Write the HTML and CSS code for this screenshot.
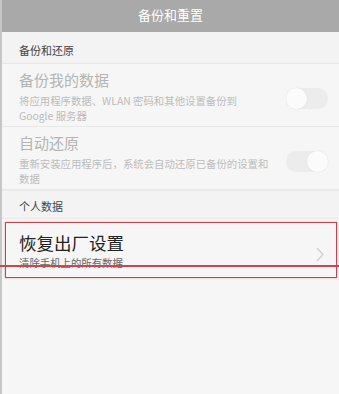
FILE: index.html
```html
<!DOCTYPE html>
<html lang="zh">
<head>
    <meta charset="UTF-8">
    <meta name="viewport" content="width=device-width, initial-scale=1.0">
    <title>备份和重置</title>
    <link rel="stylesheet" href="styles.css">
</head>
<body>
    <div class="page">
        <!-- 顶部标题栏 -->
        <div class="title-bar">备份和重置</div>

        <div class="group-title first">备份和还原</div>

        <div class="item disabled">
            <div class="item-text">
                <div class="item-name">备份我的数据</div>
                <div class="item-desc">将应用程序数据、WLAN 密码和其他设置备份到 Google 服务器</div>
            </div>
            <span class="switch"></span>
        </div>

        <div class="item disabled">
            <div class="item-text">
                <div class="item-name">自动还原</div>
                <div class="item-desc">重新安装应用程序后，系统会自动还原已备份的设置和数据</div>
            </div>
            <span class="switch on"></span>
        </div>

        <div class="group-title">个人数据</div>

        <div class="item reset">
            <div class="item-text">
                <div class="item-name">恢复出厂设置</div>
                <div class="item-desc">清除手机上的所有数据</div>
            </div>
            <svg class="arrow" width="8" height="15" viewBox="0 0 8 15">
                <path d="M1 1 L7 7.5 L1 14" fill="none" stroke="#cfcfcf" stroke-width="1.3"/>
            </svg>
        </div>

        <!-- 红色标注 -->
        <div class="mark-box"></div>
        <div class="mark-line"></div>
    </div>
</body>
</html>
```

FILE: styles.css
```css
* {
    margin: 0;
    padding: 0;
    box-sizing: border-box;
}

body {
    background: #f6f6f6;
    font-family: 'Noto Sans CJK SC', 'Noto Sans', sans-serif;
}

.page {
    position: relative;
    width: 339px;
    min-height: 394px;
    border-left: 2px solid #c6c6c6;
    background: #f6f6f6;
}

.title-bar {
    height: 32px;
    padding-bottom: 4px;
    background: #a9a9a9;
    color: #fff;
    font-size: 13px;
    display: flex;
    justify-content: center;
    align-items: center;
}

.group-title {
    padding: 10px 17px 5px;
    font-size: 11px;
    line-height: 16px;
    color: #444;
    background: #f3f3f3;
    border-bottom: 1px solid #e8e8e8;
}

.group-title.first {
    height: 32px;
}

.group-title:not(.first) {
    height: 29px;
    padding-top: 7px;
    border-top: 1px solid #ebebeb;
}

.item {
    display: flex;
    align-items: center;
    justify-content: space-between;
    padding: 6px 11px 3px 17px;
    border-bottom: 1px solid #e8e8e8;
}

.item-text {
    width: 254px;
}

.item-name {
    font-size: 15px;
    line-height: 20px;
}

.item-desc {
    margin-top: 4px;
    font-size: 10.4px;
    line-height: 14.5px;
}

.disabled .item-name {
    color: #b4b4b4;
}

.disabled .item-desc {
    color: #bcbcbc;
}

.disabled:nth-of-type(3) {
    height: 63px;
}

.disabled:nth-of-type(4) {
    height: 63px;
}

.switch {
    position: relative;
    width: 42px;
    height: 21px;
    border-radius: 11px;
    background: #ececec;
    margin-top: 4px;
}

.switch::after {
    content: '';
    position: absolute;
    top: 0;
    left: 0;
    width: 21px;
    height: 21px;
    border-radius: 50%;
    background: #fbfbfb;
    box-shadow: 0 0 2px rgba(0, 0, 0, 0.08);
}

.switch.on::after {
    left: auto;
    right: 0;
}

.reset {
    border-bottom: none;
    padding-top: 13px;
    padding-right: 15px;
}

.reset .item-name {
    font-size: 17.5px;
    line-height: 22px;
    color: #222;
}

.reset .item-desc {
    margin-top: 2px;
    font-size: 10.4px;
    color: #666;
}

.arrow {
    margin-top: 6px;
}

.mark-box {
    position: absolute;
    left: 3px;
    top: 222px;
    width: 332px;
    height: 56px;
    border: 1.5px solid #c8414b;
    box-shadow: 0 0 2px rgba(220, 90, 100, 0.5);
}

.mark-line {
    position: absolute;
    left: -2px;
    right: 0;
    top: 265px;
    height: 1.5px;
    background: #d04452;
}
```
